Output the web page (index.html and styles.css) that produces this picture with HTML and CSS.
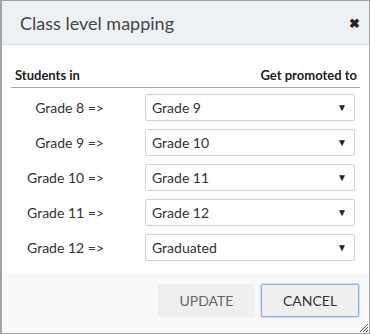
FILE: index.html
```
<!DOCTYPE html>
<html>
<head>
    <title>Class level mapping</title>
    <link rel="stylesheet" href="styles.css">
</head>
<body>
    <div class="dialog">
        <div class="dialog-header">
            <h3>Class level mapping</h3>
            <span class="close">&#10006;</span>
        </div>
        <div class="dialog-body">
            <div class="mapping-head">
                <span class="head-left">Students in</span>
                <span class="head-right">Get promoted to</span>
            </div>
            <div class="mapping-row">
                <label>Grade 8 =&gt;</label>
                <div class="select-wrap">
                    <select><option>Grade 9</option></select>
                </div>
            </div>
            <div class="mapping-row">
                <label>Grade 9 =&gt;</label>
                <div class="select-wrap">
                    <select><option>Grade 10</option></select>
                </div>
            </div>
            <div class="mapping-row">
                <label>Grade 10 =&gt;</label>
                <div class="select-wrap">
                    <select><option>Grade 11</option></select>
                </div>
            </div>
            <div class="mapping-row">
                <label>Grade 11 =&gt;</label>
                <div class="select-wrap">
                    <select><option>Grade 12</option></select>
                </div>
            </div>
            <div class="mapping-row">
                <label>Grade 12 =&gt;</label>
                <div class="select-wrap">
                    <select><option>Graduated</option></select>
                </div>
            </div>
        </div>
        <div class="dialog-footer">
            <button class="btn btn-update">UPDATE</button>
            <button class="btn btn-cancel">CANCEL</button>
        </div>
        <svg class="resize" width="10" height="10" viewBox="0 0 10 10">
            <line x1="1" y1="9" x2="9" y2="1" stroke="#555" stroke-width="1"/>
            <line x1="4" y1="9" x2="9" y2="4" stroke="#555" stroke-width="1"/>
            <line x1="7" y1="9" x2="9" y2="7" stroke="#555" stroke-width="1"/>
        </svg>
    </div>
</body>
</html>
```
FILE: styles.css
```
* {
    box-sizing: border-box;
}

body {
    margin: 0;
    font-family: Lato, "Open Sans", sans-serif;
    background: white;
}

.dialog {
    position: relative;
    width: 370px;
    height: 334px;
    border: 1px solid #a3a3a3;
    border-left-width: 2px;
    background: white;
    display: flex;
    flex-direction: column;
}

.dialog-header {
    height: 44px;
    background: #edf1f4;
    border-bottom: 1px solid #dcdfe2;
    display: flex;
    align-items: center;
    justify-content: space-between;
    padding: 0 9px 0 18px;
}

.dialog-header h3 {
    margin: 0;
    font-size: 18px;
    font-weight: 400;
    color: #444;
}

.close {
    font-size: 13px;
    color: #222;
    font-weight: 700;
}

.dialog-body {
    flex: 1;
    padding: 22px 9px 0 9px;
}

.mapping-head {
    display: flex;
    justify-content: space-between;
    padding: 0 3px 4px 4px;
    border-bottom: 1px solid #a8a8a8;
    font-size: 13px;
    color: #222;
    font-weight: 700;
}

.mapping-row {
    display: flex;
    align-items: center;
    margin-top: 8px;
}

.mapping-row:nth-child(2) {
    margin-top: 6px;
}

.mapping-row label {
    width: 93px;
    text-align: right;
    font-size: 14px;
    color: #333;
}

.select-wrap {
    position: relative;
    margin-left: 41px;
    width: 210px;
}

.select-wrap::after {
    content: "\25BC";
    position: absolute;
    right: 8px;
    top: 7px;
    font-size: 10px;
    color: #222;
    pointer-events: none;
}

select {
    appearance: none;
    width: 100%;
    height: 27px;
    border: 1px solid #d2d2d2;
    border-radius: 2px;
    background: white;
    padding: 0 6px;
    font-family: Lato, sans-serif;
    font-size: 14px;
    color: #333;
}

.dialog-footer {
    height: 60px;
    background: #f9f9f9;
    display: flex;
    justify-content: flex-end;
    align-items: flex-start;
    gap: 6px;
    padding: 11px 10px 0 0;
}

.btn {
    height: 33px;
    width: 97px;
    border: 1px solid #f0f0f0;
    background: #efefef;
    font-family: Lato, sans-serif;
    font-size: 14px;
    border-radius: 2px;
}

.btn-update {
    color: #666;
}

.btn-cancel {
    color: #333;
    width: 98px;
    border: 1px solid #8fb2ea;
    box-shadow: 0 0 0 1px #c9dcf7;
}

.resize {
    position: absolute;
    right: 0;
    bottom: 0;
}
```
